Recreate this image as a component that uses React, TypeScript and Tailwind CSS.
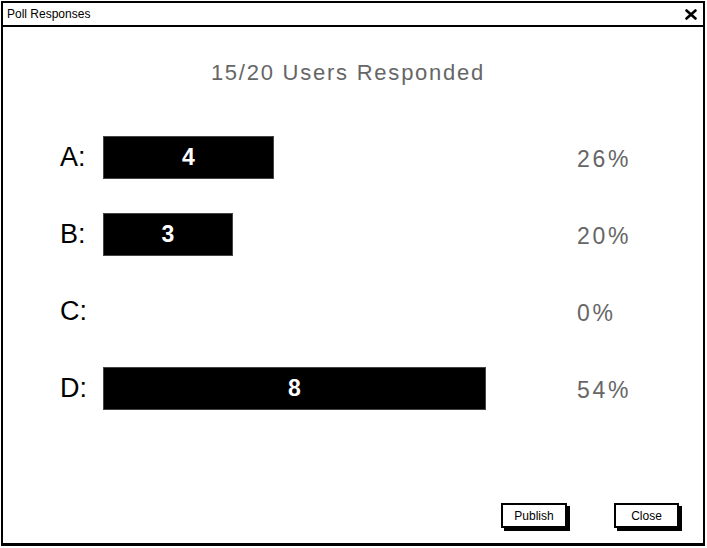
import React from "react";

const rows = [
  { label: "A", count: 4, width: 171, pct: "26%" },
  { label: "B", count: 3, width: 130, pct: "20%" },
  { label: "C", count: 0, width: 0, pct: "0%" },
  { label: "D", count: 8, width: 383, pct: "54%" },
];

export default function App() {
  return (
    <div className="w-[707px] h-[548px] bg-white p-px font-['Liberation_Sans',Arial,sans-serif]">
      <div className="flex flex-col h-[545px] w-[704px] border-2 border-b-[3px] border-black">
        {/* Title bar */}
        <div className="flex items-center justify-between h-[24px] border-b-2 border-black px-[4px]">
          <span className="text-[12px] text-black">Poll Responses</span>
          <svg width="12" height="11" viewBox="0 0 12 11" className="mr-[2px]">
            <path d="M1.5 1.5 L10.5 9.5 M10.5 1.5 L1.5 9.5" stroke="black" strokeWidth="2.6" strokeLinecap="round" />
          </svg>
        </div>

        {/* Body */}
        <div className="flex flex-col flex-1 relative">
          <h1 className="mt-[29px] text-center text-[22px] text-[#666] tracking-[0.08em] pr-[10px]">
            15/20 Users Responded
          </h1>

          <div className="flex flex-col mt-[47px] gap-[34px]">
            {rows.map((r) => (
              <div key={r.label} className="flex items-center h-[43px]">
                <span className="w-[100px] pl-[57px] text-[27px] text-black leading-none">{r.label}:</span>
                <div className="w-[474px] flex">
                  {r.width > 0 && (
                    <div
                      className="h-[43px] bg-black border border-[#444] flex items-center justify-center text-white font-bold text-[23px]"
                      style={{ width: r.width }}
                    >
                      {r.count}
                    </div>
                  )}
                </div>
                <span className="text-[23px] text-[#666] tracking-[0.12em] mt-[4px]">{r.pct}</span>
              </div>
            ))}
          </div>

          <div className="mt-auto mb-[15px] flex justify-end gap-[47px] pr-[24px]">
            <button className="w-[66px] h-[25px] border-2 border-black bg-white text-[12px] text-black shadow-[3px_3px_0_#000]">
              Publish
            </button>
            <button className="w-[65px] h-[25px] border-2 border-black bg-white text-[12px] text-black shadow-[3px_3px_0_#000]">
              Close
            </button>
          </div>
        </div>
      </div>
    </div>
  );
}
